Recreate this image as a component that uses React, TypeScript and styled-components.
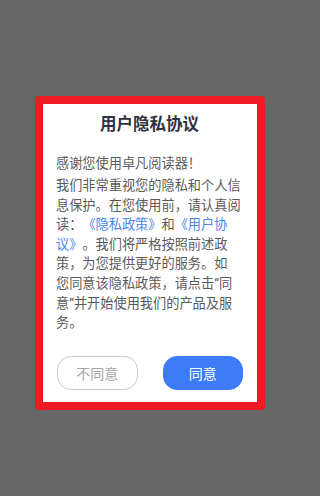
import styled, { createGlobalStyle } from "styled-components";

const GlobalStyle = createGlobalStyle`
  html, body {
    margin: 0;
    padding: 0;
    background: #666666;
  }
  body {
    font-family: Roboto, "Noto Sans CJK SC", sans-serif;
    text-spacing-trim: space-all;
  }
`;

const Screen = styled.div`
  width: 300px;
  height: 496px;
  background: #666666;
  display: flex;
  flex-direction: column;
  align-items: center;
  padding-top: 96px;
  box-sizing: border-box;
`;

const Dialog = styled.div`
  width: 230px;
  box-sizing: border-box;
  border: 8px solid #ee1b24;
  border-radius: 4px;
  background: #ffffff;
  padding: 9px 14px 12px 13px;
  display: flex;
  flex-direction: column;
`;

const Title = styled.h1`
  margin: 0;
  font-size: 16.5px;
  line-height: 24px;
  font-weight: 700;
  color: #2e3140;
  text-align: center;
`;

const Body = styled.div`
  margin-top: 17px;
  font-size: 13.2px;
  line-height: 19.6px;
  color: #5a5a5a;
  text-spacing-trim: space-all;
  white-space: nowrap;
`;

const Greeting = styled.p`
  margin: 0 0 2.5px;
`;

const Paragraph = styled.p`
  margin: 0;
`;

const Link = styled.span`
  color: #4a85ee;
`;

const Actions = styled.div`
  margin-top: 23px;
  display: flex;
  justify-content: center;
  gap: 25px;
  padding-left: 1px;
`;

const Button = styled.button<{ $primary?: boolean }>`
  width: 84px;
  height: 34px;
  box-sizing: border-box;
  border-radius: 14px;
  font-family: inherit;
  font-size: 14px;
  cursor: pointer;
  border: 1px solid ${(p) => (p.$primary ? "#3e7bf6" : "#c9c9c9")};
  background: ${(p) => (p.$primary ? "#3e7bf6" : "#ffffff")};
  color: ${(p) => (p.$primary ? "#ffffff" : "#a6a6a6")};
`;

function App() {
  return (
    <Screen>
      <GlobalStyle />
      <Dialog>
        <Title>用户隐私协议</Title>
        <Body>
          <Greeting>感谢您使用卓凡阅读器！</Greeting>
          <Paragraph>
            我们非常重视您的隐私和个人信
            <br />
            息保护。在您使用前，请认真阅
            <br />
            读：<Link>《隐私政策》</Link>和<Link>《用户协</Link>
            <br />
            <Link>议》</Link>。我们将严格按照前述政
            <br />
            策，为您提供更好的服务。如
            <br />
            您同意该隐私政策，请点击“同
            <br />
            意”并开始使用我们的产品及服
            <br />
            务。
          </Paragraph>
        </Body>
        <Actions>
          <Button>不同意</Button>
          <Button $primary>同意</Button>
        </Actions>
      </Dialog>
    </Screen>
  );
}

export default App;
